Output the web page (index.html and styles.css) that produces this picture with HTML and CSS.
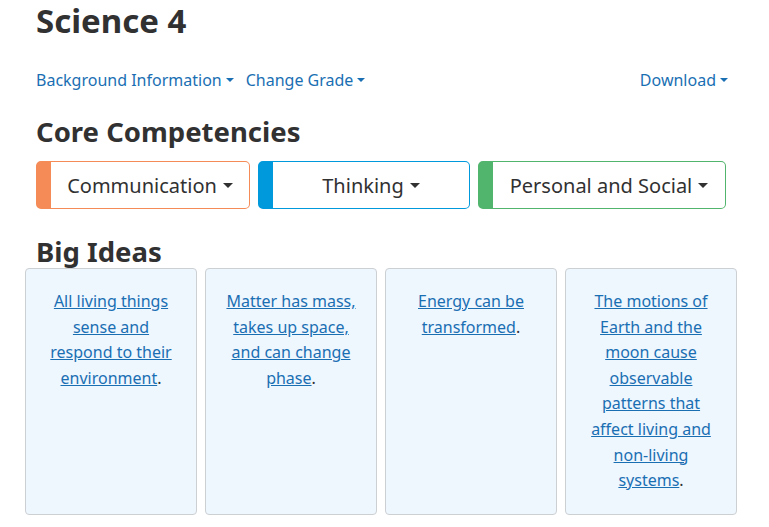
FILE: index.html
```html
<!DOCTYPE html>
<html lang="en">
<head>
<meta charset="utf-8">
<title>Science 4</title>
<link rel="stylesheet" href="styles.css">
</head>
<body>
<main class="page">
  <h1 class="title">Science 4</h1>
  <nav class="toolbar">
    <div class="toolbar-left">
      <a class="drop-link" href="#">Background Information<span class="caret"></span></a>
      <a class="drop-link" href="#">Change Grade<span class="caret"></span></a>
    </div>
    <a class="drop-link" href="#">Download<span class="caret"></span></a>
  </nav>
  <h2 class="section-title">Core Competencies</h2>
  <div class="competencies">
    <button class="comp comp-communication" type="button"><span class="comp-label">Communication<span class="caret caret-lg"></span></span></button>
    <button class="comp comp-thinking" type="button"><span class="comp-label">Thinking<span class="caret caret-lg"></span></span></button>
    <button class="comp comp-social" type="button"><span class="comp-label">Personal and Social<span class="caret caret-lg"></span></span></button>
  </div>
  <h2 class="section-title big-ideas-title">Big Ideas</h2>
  <div class="ideas">
    <div class="idea"><p><a href="#">All living things sense and respond to their environment</a>.</p></div>
    <div class="idea"><p><a href="#">Matter has mass, takes up space, and can change phase</a>.</p></div>
    <div class="idea"><p><a href="#">Energy can be transformed</a>.</p></div>
    <div class="idea"><p><a href="#">The motions of Earth and the moon cause observable patterns that affect living and non-living systems</a>.</p></div>
  </div>
</main>
</body>
</html>
```
FILE: styles.css
```css
* { box-sizing: border-box; }
html, body { margin: 0; padding: 0; background: #fff; }
body {
  font-family: "Noto Sans", "Open Sans", sans-serif;
  color: #313132;
  font-size: 16px;
}
.page {
  padding: 0 36px 0 36px;
}
.title {
  margin: 0;
  padding-top: 0;
  font-size: 33px;
  line-height: 42px;
  font-weight: 700;
  color: #313132;
}
.toolbar {
  display: flex;
  justify-content: space-between;
  align-items: center;
  margin-top: 26px;
  padding-right: 5px;
  height: 24px;
}
.toolbar-left { display: flex; gap: 12px; }
.drop-link {
  color: #1a6fb3;
  text-decoration: none;
  font-size: 16px;
  line-height: 24px;
  display: inline-flex;
  align-items: center;
}
.caret {
  display: inline-block;
  width: 0;
  height: 0;
  margin-left: 4px;
  border-top: 4px solid currentColor;
  border-left: 4px solid transparent;
  border-right: 4px solid transparent;
}
.caret-lg {
  margin-left: 6px;
  border-top-width: 5px;
  border-left-width: 5px;
  border-right-width: 5px;
}
.section-title {
  margin: 0;
  font-size: 27.5px;
  line-height: 38px;
  font-weight: 700;
  color: #313132;
}
.toolbar + .section-title { margin-top: 21px; }
.competencies {
  display: flex;
  gap: 8px;
  margin-top: 10px;
}
.comp {
  height: 48px;
  background: #fff;
  border: 1px solid;
  border-left-width: 15px;
  border-radius: 5px;
  font-family: inherit;
  font-size: 20px;
  color: #313132;
  padding: 0;
  display: flex;
  align-items: center;
  justify-content: center;
}
.comp-label { display: inline-flex; align-items: center; }
.comp-communication { width: 214px; border-color: #f58b57; }
.comp-thinking { width: 212px; border-color: #0099dc; }
.comp-social { width: 248px; border-color: #52b56d; }
.big-ideas-title { margin-top: 24px; }
.ideas {
  display: flex;
  gap: 8px;
  margin: -3px -11px 0;
}
.idea {
  width: 172px;
  min-height: 247px;
  background: #eef6fe;
  border: 1px solid #cdd0d3;
  border-radius: 4px;
  padding: 20px 16px 19px;
  text-align: center;
}
.idea p {
  margin: 0;
  line-height: 25.6px;
  font-size: 16px;
}
.idea a { color: #1a6fb3; text-decoration: underline; }
```
